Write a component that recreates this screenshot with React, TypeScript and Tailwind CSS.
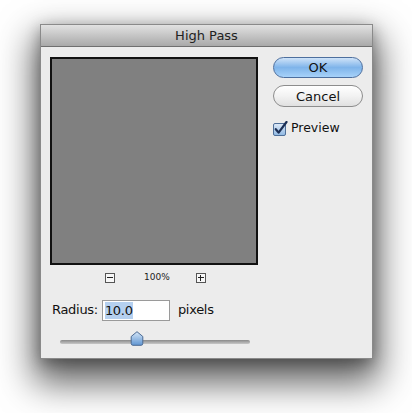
export default function App() {
  const font = { fontFamily: '"DejaVu Sans", "Noto Sans", sans-serif' };

  return (
    <div className="w-[412px] h-[413px] bg-white overflow-hidden" style={font}>
      <div className="ml-[40px] mt-[24px] w-[333px] h-[335px] flex flex-col bg-[#ececec] border border-[#8a8a8a] shadow-[0_18px_34px_6px_rgba(0,0,0,0.62),0_4px_14px_rgba(0,0,0,0.3)]">
        {/* Title bar */}
        <div className="h-[22px] flex items-center justify-center bg-gradient-to-b from-[#e2e2e2] to-[#a9a9a9] border-b border-[#6f6f6f] text-[13px] text-[#222]">
          High Pass
        </div>

        <div className="flex-1 flex flex-col pl-[9px]">
          <div className="flex pt-[10px]">
            {/* Preview area */}
            <div className="w-[208px] h-[208px] bg-[#808080] border-2 border-[#111]" />

            {/* Buttons column */}
            <div className="ml-[15px] w-[90px] flex flex-col">
              <button className="h-[21px] rounded-full border border-[#4d6f9e] bg-gradient-to-b from-[#cfe3f8] via-[#7fb4ea] to-[#a7d2f9] text-[13px] text-[#111] leading-none">
                OK
              </button>
              <button className="mt-[7px] h-[22px] rounded-full border border-[#8d8d8d] bg-gradient-to-b from-white via-[#f2f2f2] to-[#e0e0e0] text-[13px] text-[#111] leading-none">
                Cancel
              </button>
              <div className="mt-[12px] flex items-center gap-[3px] text-[12.5px] text-[#111]">
                <svg width="15" height="15" viewBox="0 0 15 15">
                  <defs>
                    <linearGradient id="cb" x1="0" y1="0" x2="0" y2="1">
                      <stop offset="0" stopColor="#dfeaf7" />
                      <stop offset="1" stopColor="#8fb8e3" />
                    </linearGradient>
                  </defs>
                  <rect x="0.5" y="2.5" width="12" height="12" rx="1.5" fill="url(#cb)" stroke="#4f6f98" />
                  <path d="M2.8 8.2 L5.6 11.6 L13.5 1" fill="none" stroke="#1c2f55" strokeWidth="2.2" strokeLinecap="round" strokeLinejoin="round" />
                </svg>
                <span>Preview</span>
              </div>
            </div>
          </div>

          {/* Zoom controls */}
          <div className="mt-[6px] flex items-center text-[9px] text-[#222]">
            <div className="ml-[55px] w-[10px] h-[10px] border border-[#555] bg-[#f7f7f7] flex items-center justify-center">
              <div className="w-[6px] h-px bg-[#222]" />
            </div>
            <span className="ml-[29px]">100%</span>
            <div className="ml-[26px] w-[10px] h-[10px] border border-[#555] bg-[#f7f7f7] relative">
              <div className="absolute left-[1px] top-[3.5px] w-[6px] h-px bg-[#222]" />
              <div className="absolute left-[3.5px] top-[1px] w-px h-[6px] bg-[#222]" />
            </div>
          </div>

          {/* Radius row */}
          <div className="mt-[15px] flex items-center text-[13px] tracking-[-0.3px] text-[#111]">
            <span className="ml-[2px]">Radius:</span>
            <div className="ml-[4px] w-[68px] h-[21px] bg-white border border-[#9a9a9a] flex items-center pl-[2px]">
              <span className="bg-[#b5d0ef] leading-[17px]">10.0</span>
            </div>
            <span className="ml-[8px]">pixels</span>
          </div>

          {/* Slider */}
          <div className="mt-[10px] ml-[10px] w-[190px] h-[16px] relative">
            <div className="absolute left-0 right-0 top-[9px] h-[4px] rounded-full bg-gradient-to-b from-[#8a8a8a] to-[#c8c8c8]" />
            <svg className="absolute left-[70px] top-0" width="14" height="15" viewBox="0 0 14 15">
              <defs>
                <linearGradient id="th" x1="0" y1="0" x2="0" y2="1">
                  <stop offset="0" stopColor="#d6e7f8" />
                  <stop offset="1" stopColor="#5f95d2" />
                </linearGradient>
              </defs>
              <path d="M7 0.7 L12.8 5.5 L12.8 12.5 Q12.8 14.3 11 14.3 L3 14.3 Q1.2 14.3 1.2 12.5 L1.2 5.5 Z" fill="url(#th)" stroke="#4b6a93" strokeWidth="1" />
            </svg>
          </div>
        </div>
      </div>
    </div>
  );
}
